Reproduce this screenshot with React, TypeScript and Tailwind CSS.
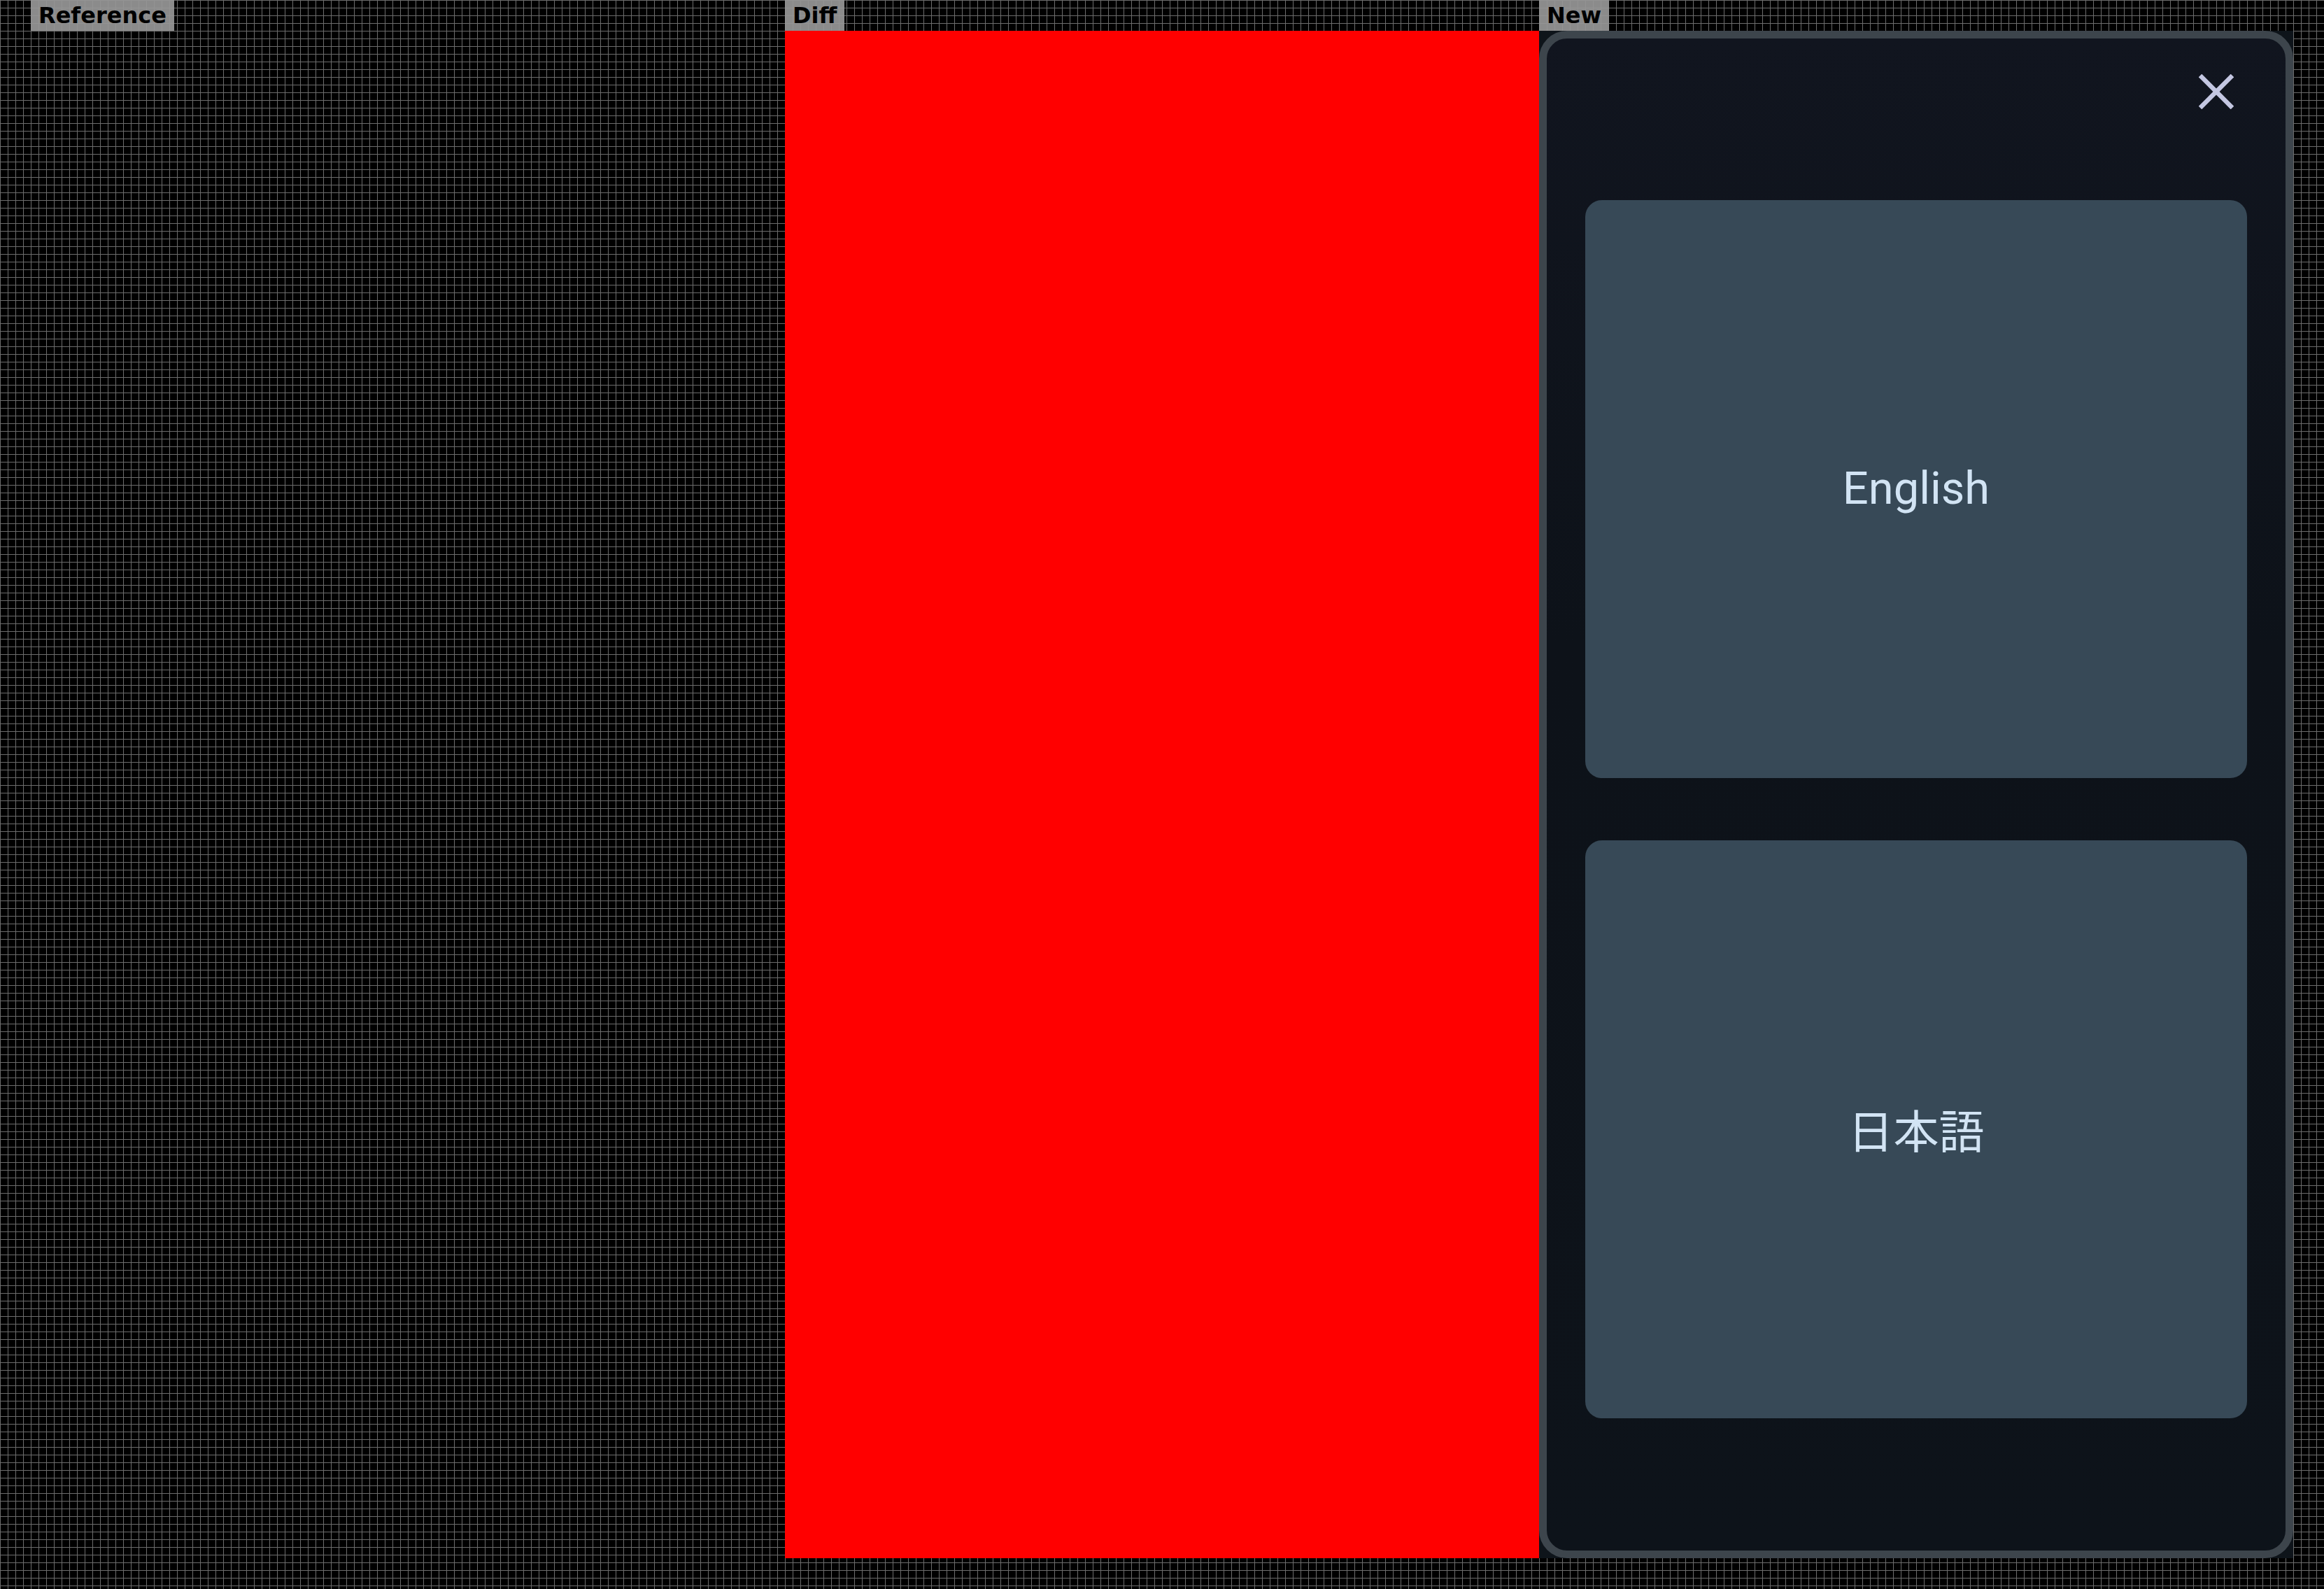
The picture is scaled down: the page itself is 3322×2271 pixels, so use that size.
import React from "react";

function Label({ text }: { text: string }) {
  return (
    <div className="self-start h-[44px] px-[11px] bg-[rgba(150,150,150,0.93)] text-black font-bold text-[32px] leading-[44px] font-['DejaVu_Sans',sans-serif] whitespace-nowrap">
      {text}
    </div>
  );
}

function LangButton({ children, jp }: { children: React.ReactNode; jp?: boolean }) {
  return (
    <button
      className={
        "h-[826px] w-full rounded-[24px] bg-[#374957] text-[#d2e4f4] text-[65px] font-normal flex items-center justify-center " +
        (jp
          ? "font-['Noto_Sans_CJK_JP','Noto_Sans',sans-serif] text-[64px]"
          : "font-['Roboto','Noto_Sans',sans-serif]")
      }
    >
      {children}
    </button>
  );
}

export default function App() {
  return (
    <div className="w-[3322px] h-[2271px] bg-black bg-[linear-gradient(to_right,#6c6c6c_1px,transparent_1px),linear-gradient(to_bottom,#6c6c6c_1px,transparent_1px)] bg-size-[11px_11px] flex px-[44px] overflow-hidden">
      {/* Reference */}
      <div className="w-[1078px] flex flex-col">
        <Label text="Reference" />
        <div className="h-[2183px]" />
      </div>
      {/* Diff */}
      <div className="w-[1078px] flex flex-col">
        <Label text="Diff" />
        <div className="h-[2183px] bg-[#ff0000]" />
      </div>
      {/* New */}
      <div className="w-[1078px] flex flex-col">
        <Label text="New" />
        <div className="h-[2183px] bg-[#0e141a]">
          <div className="h-full rounded-[40px] border-[11px] border-[#3d454c] bg-[linear-gradient(to_bottom,#11151f,#0d1219_40%,#0d131a)] flex flex-col">
            <div className="h-[231px] flex justify-end items-start pt-[11px] pr-[34px]">
              <button className="w-[130px] h-[130px] rounded-full bg-[rgba(255,255,255,0.005)] flex items-center justify-center">
                <svg width="50" height="50" viewBox="0 0 50 50">
                  <line x1="2" y1="2" x2="48" y2="48" stroke="#c4c7e2" strokeWidth="6.5" />
                  <line x1="48" y1="2" x2="2" y2="48" stroke="#c4c7e2" strokeWidth="6.5" />
                </svg>
              </button>
            </div>
            <div className="px-[55px] flex flex-col gap-[89px]">
              <LangButton>English</LangButton>
              <LangButton jp>日本語</LangButton>
            </div>
          </div>
        </div>
      </div>
    </div>
  );
}
